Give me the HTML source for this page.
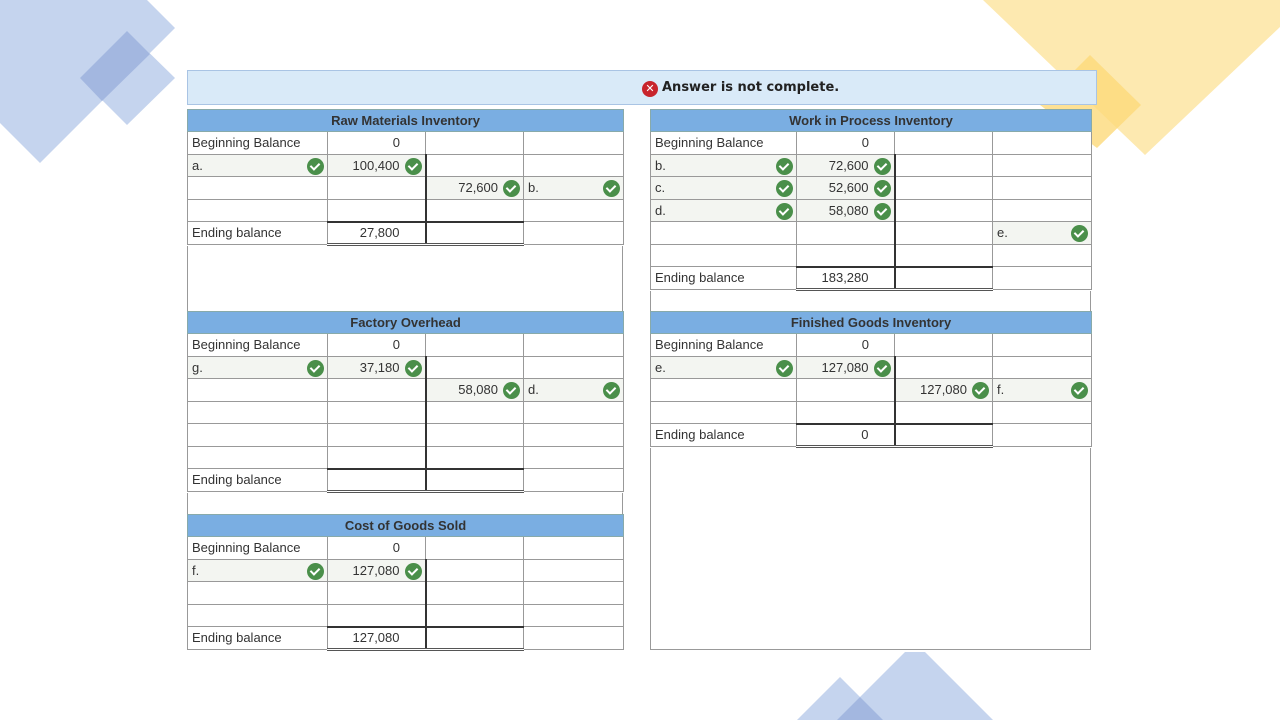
<!DOCTYPE html>
<html><head><meta charset="utf-8"><style>
*{margin:0;padding:0;box-sizing:border-box}
body{width:1280px;height:720px;position:relative;overflow:hidden;background:#fff;font-family:"Liberation Sans",Arial,sans-serif;color:#333;font-size:13px}
svg.bg{position:absolute;left:0;top:0}
.hdr{position:absolute;left:187px;top:70px;width:910px;height:35px;background:#d9eaf8;border:1px solid #a9c4e4}
.hdr span{position:absolute;left:474px;top:9px;font-family:"DejaVu Sans",sans-serif;font-weight:bold;font-size:13px;color:#222}
.x{position:absolute;left:-20px;top:1px;width:16px;height:16px;border-radius:50%;background:#c8242c;color:#fff;font-size:11px;line-height:16px;text-align:center;font-style:normal}
.panel{position:absolute;top:109px;height:541px;border-left:1px solid #999;border-right:1px solid #999;border-bottom:1px solid #999;background:#fff}
table{position:absolute;border-collapse:collapse;table-layout:fixed;background:#fff}
td{border:1px solid #999;height:22.5px;padding:0 4px;white-space:nowrap;position:relative;font-size:13px}
th{background:#7aaee2;border:1px solid #8aa;height:22px;font-weight:bold;font-size:13px;color:#333}
td.c3{border-left:2px solid #333}
tr.bb td.c3{border-left:1px solid #999}
td.g{background:#f3f5f1}
td.n{text-align:right;padding-right:25px}
.ck{position:absolute;right:3px;top:3px;width:17px;height:17px;border-radius:50%;background:#4a8f4a}
.ck::after{content:"";position:absolute;left:5px;top:3px;width:4px;height:7px;border:solid #fff;border-width:0 2px 2px 0;transform:rotate(45deg)}
tr.end td.v{border-top:2px solid #333;border-bottom:3px double #555}
</style></head><body>
<svg class="bg" width="1280" height="720">
<polygon points="0,0 147,0 175,28 40,163 0,123" fill="#c5d4ee"/>
<polygon points="127,31 175,78 127,125 80,78" fill="#c5d4ee"/>
<polygon points="127,31 150,54 102,101 80,78" fill="#a3b7e0"/>
<polygon points="983,0 1280,0 1280,27 1145,155" fill="#fde9b0"/>
<polygon points="1090,55 1141,105 1097,148 1040,105" fill="#fdd97a" opacity="0.8"/>
<polygon points="905,652 925,652 993,720 837,720" fill="#c5d4ee"/>
<polygon points="840,677 883,720 797,720" fill="#c5d4ee"/>
<polygon points="860,697 883,720 837,720" fill="#a3b7e0"/>
</svg>
<div class="hdr"><span><i class="x">✕</i>Answer is not complete.</span></div>
<div class="panel" style="left:187px;width:436px"></div>
<div class="panel" style="left:650px;width:441px"></div>

<table style="left:187px;top:109px;width:436px">
<colgroup><col style="width:140px"><col style="width:98px"><col style="width:98px"><col style="width:100px"></colgroup>
<tr><th colspan="4">Raw Materials Inventory</th></tr>
<tr class="bb"><td>Beginning Balance</td><td class="n">0</td><td class="c3"></td><td></td></tr>
<tr><td class="g">a.<i class="ck"></i></td><td class="g n">100,400<i class="ck"></i></td><td class="c3"></td><td></td></tr>
<tr><td></td><td></td><td class="c3 g n">72,600<i class="ck"></i></td><td class="g">b.<i class="ck"></i></td></tr>
<tr><td></td><td></td><td class="c3"></td><td></td></tr>
<tr class="end"><td>Ending balance</td><td class="n v">27,800</td><td class="c3 v"></td><td></td></tr>
</table>

<table style="left:187px;top:311px;width:436px">
<colgroup><col style="width:140px"><col style="width:98px"><col style="width:98px"><col style="width:100px"></colgroup>
<tr><th colspan="4">Factory Overhead</th></tr>
<tr class="bb"><td>Beginning Balance</td><td class="n">0</td><td class="c3"></td><td></td></tr>
<tr><td class="g">g.<i class="ck"></i></td><td class="g n">37,180<i class="ck"></i></td><td class="c3"></td><td></td></tr>
<tr><td></td><td></td><td class="c3 g n">58,080<i class="ck"></i></td><td class="g">d.<i class="ck"></i></td></tr>
<tr><td></td><td></td><td class="c3"></td><td></td></tr>
<tr><td></td><td></td><td class="c3"></td><td></td></tr>
<tr><td></td><td></td><td class="c3"></td><td></td></tr>
<tr class="end"><td>Ending balance</td><td class="n v"></td><td class="c3 v"></td><td></td></tr>
</table>

<table style="left:187px;top:514px;width:436px">
<colgroup><col style="width:140px"><col style="width:98px"><col style="width:98px"><col style="width:100px"></colgroup>
<tr><th colspan="4">Cost of Goods Sold</th></tr>
<tr class="bb"><td>Beginning Balance</td><td class="n">0</td><td class="c3"></td><td></td></tr>
<tr><td class="g">f.<i class="ck"></i></td><td class="g n">127,080<i class="ck"></i></td><td class="c3"></td><td></td></tr>
<tr><td></td><td></td><td class="c3"></td><td></td></tr>
<tr><td></td><td></td><td class="c3"></td><td></td></tr>
<tr class="end"><td>Ending balance</td><td class="n v">127,080</td><td class="c3 v"></td><td></td></tr>
</table>

<table style="left:650px;top:109px;width:441px">
<colgroup><col style="width:146px"><col style="width:98px"><col style="width:98px"><col style="width:99px"></colgroup>
<tr><th colspan="4">Work in Process Inventory</th></tr>
<tr class="bb"><td>Beginning Balance</td><td class="n">0</td><td class="c3"></td><td></td></tr>
<tr><td class="g">b.<i class="ck"></i></td><td class="g n">72,600<i class="ck"></i></td><td class="c3"></td><td></td></tr>
<tr><td class="g">c.<i class="ck"></i></td><td class="g n">52,600<i class="ck"></i></td><td class="c3"></td><td></td></tr>
<tr><td class="g">d.<i class="ck"></i></td><td class="g n">58,080<i class="ck"></i></td><td class="c3"></td><td></td></tr>
<tr><td></td><td></td><td class="c3"></td><td class="g">e.<i class="ck"></i></td></tr>
<tr><td></td><td></td><td class="c3"></td><td></td></tr>
<tr class="end"><td>Ending balance</td><td class="n v">183,280</td><td class="c3 v"></td><td></td></tr>
</table>

<table style="left:650px;top:311px;width:441px">
<colgroup><col style="width:146px"><col style="width:98px"><col style="width:98px"><col style="width:99px"></colgroup>
<tr><th colspan="4">Finished Goods Inventory</th></tr>
<tr class="bb"><td>Beginning Balance</td><td class="n">0</td><td class="c3"></td><td></td></tr>
<tr><td class="g">e.<i class="ck"></i></td><td class="g n">127,080<i class="ck"></i></td><td class="c3"></td><td></td></tr>
<tr><td></td><td></td><td class="c3 g n">127,080<i class="ck"></i></td><td class="g">f.<i class="ck"></i></td></tr>
<tr><td></td><td></td><td class="c3"></td><td></td></tr>
<tr class="end"><td>Ending balance</td><td class="n v">0</td><td class="c3 v"></td><td></td></tr>
</table>
</body></html>
